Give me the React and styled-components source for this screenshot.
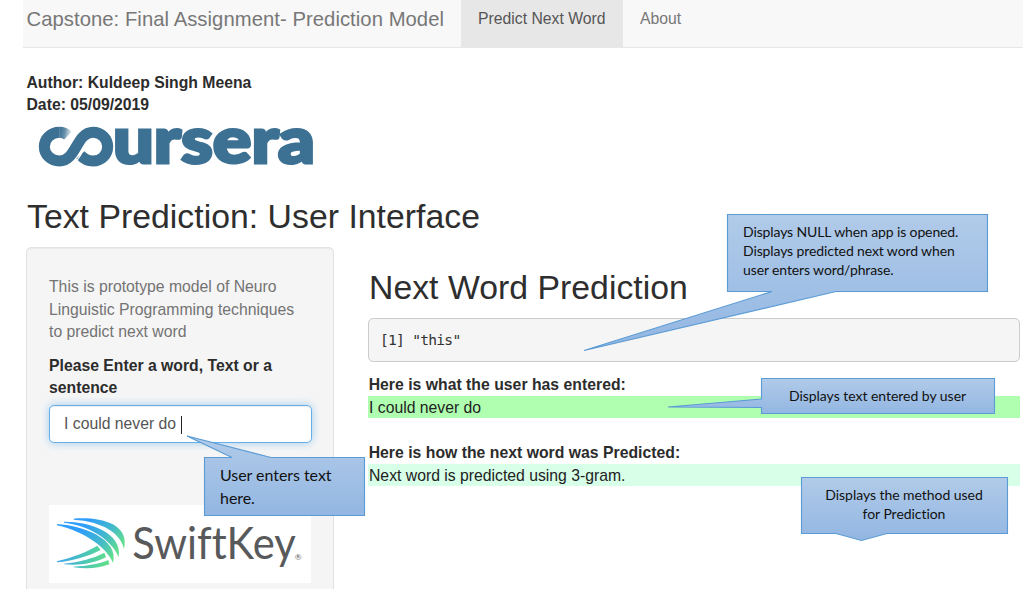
import React from "react";
import styled, { createGlobalStyle } from "styled-components";

const GlobalStyle = createGlobalStyle`
  * { box-sizing: border-box; }
  html, body { margin: 0; padding: 0; overflow: hidden; }
  body {
    background: #fff;
    color: #333;
    font: 15.75px/22.5px "Liberation Sans", Arial, sans-serif;
  }
`;

const Page = styled.div`
  position: relative;
  width: 1023px;
  height: 589px;
  overflow: hidden;
  display: flex;
  flex-direction: column;
`;

const Navbar = styled.nav`
  display: flex;
  height: 48px;
  margin-left: 23px;
  background: #f8f8f8;
  border-bottom: 1px solid #e7e7e7;
`;

const Brand = styled.div`
  width: 438px;
  padding: 8px 0 0 3.5px;
  font-size: 20.25px;
  line-height: 22px;
  letter-spacing: 0.05px;
  color: #777;
  white-space: nowrap;
`;

const Tab = styled.a`
  padding: 8px 17px 0;
  height: 48px;
  color: ${(p) => (p.$active ? "#555" : "#777")};
  background: ${(p) => (p.$active ? "#e7e7e7" : "transparent")};
  width: ${(p) => (p.$active ? "162px" : "auto")};
  white-space: nowrap;
`;

const Body = styled.main`
  display: flex;
  flex-direction: column;
  padding: 23px 3px 0 26px;
`;

const Strong = styled.div`
  font-weight: 700;
  color: #2c2c2c;
  white-space: nowrap;
`;

const Byline = styled.div`
  padding: 0.5px 0 0 0.5px;
  height: 45px;
`;

const CourseraLogo = styled.svg`
  display: block;
  width: 300px;
  height: 60px;
  margin: 2px 0 0 4px;
  overflow: visible;
`;

const Heading = styled.h2`
  margin: 0;
  font-size: 33.75px;
  line-height: 37px;
  font-weight: 400;
  letter-spacing: 0.03px;
  color: #2e2e2e;
  white-space: nowrap;
`;

const PageHeading = styled(Heading)`
  margin: 20px 0 12px 1px;
`;

const Columns = styled.div`
  display: flex;
  align-items: flex-start;
  gap: 34px;
`;

const Sidebar = styled.aside`
  width: 308px;
  height: 370px;
  padding: 28px 22px;
  background: #f5f5f5;
  border: 1px solid #e3e3e3;
  border-radius: 5px;
  box-shadow: inset 0 1px 1px rgba(0, 0, 0, 0.05);
`;

const Help = styled.p`
  margin: 0 0 11px;
  color: #737373;
`;

const Field = styled.div`
  display: flex;
  align-items: center;
  width: 263px;
  height: 38px;
  margin-top: 5px;
  padding: 2px 0 0 14px;
  color: #555;
  background: #fff;
  border: 1px solid #66afe9;
  border-radius: 5px;
  box-shadow: inset 0 1px 1px rgba(0, 0, 0, 0.075), 0 0 8px rgba(102, 175, 233, 0.6);
`;

const Caret = styled.span`
  width: 1px;
  height: 18px;
  margin-left: 5px;
  background: #222;
`;

const SwiftKeyLogo = styled.svg`
  display: block;
  width: 262px;
  height: 78px;
  margin-top: 62px;
  background: #fff;
  font-variant-ligatures: none;
`;

const Results = styled.section`
  width: 652px;
  padding-top: 22px;
`;

const ResultsHeading = styled(Heading)`
  padding-left: 1px;
`;

const Output = styled.pre`
  margin: 12px 0 11px;
  height: 44px;
  padding: 10px 11px;
  font: 14.625px/21px "DejaVu Sans Mono", monospace;
  letter-spacing: -0.75px;
  background: #f5f5f5;
  border: 1px solid #ccc;
  border-radius: 5px;
`;

const ResultLabel = styled(Strong)`
  height: 23px;
  padding-left: 0.7px;
  line-height: 24px;
  letter-spacing: 0.02px;
`;

const Highlight = styled.div`
  height: 22px;
  margin-bottom: 23px;
  padding-left: 1px;
  line-height: 24px;
  color: #222;
  background: ${(p) => p.$color};
`;

const Note = styled.div`
  position: absolute;
  left: ${(p) => p.$x}px;
  top: ${(p) => p.$y}px;
  width: ${(p) => p.$w}px;
  height: ${(p) => p.$h}px;
`;

const NoteShape = styled.svg`
  position: absolute;
  inset: 0;
  overflow: visible;
`;

const NoteText = styled.div`
  position: relative;
  padding: ${(p) => p.$pad};
  color: #111;
  font-family: Lato, sans-serif;
  font-size: ${(p) => p.$size}px;
  line-height: ${(p) => p.$line}px;
  letter-spacing: ${(p) => p.$track}px;
  text-align: ${(p) => p.$align || "left"};
  white-space: pre;
`;

function Callout({ id, x, y, w, h, points, top, bottom, text, ...type }) {
  return (
    <Note $x={x} $y={y} $w={w} $h={h}>
      <NoteShape width={w} height={h}>
        <defs>
          <linearGradient id={id} gradientUnits="userSpaceOnUse" x1="0" y1={top} x2="0" y2={bottom}>
            <stop offset="0" stopColor="#b1cbe9" />
            <stop offset="1" stopColor="#92b6e2" />
          </linearGradient>
        </defs>
        <polygon points={points} fill={`url(#${id})`} stroke="#5b9bd5" strokeWidth="1.1" />
      </NoteShape>
      <NoteText {...type}>{text}</NoteText>
    </Note>
  );
}

function Coursera() {
  return (
    <CourseraLogo viewBox="0 0 900 180" role="img" aria-label="coursera">
      <defs>
        <linearGradient id="fade" gradientUnits="userSpaceOnUse" x1="88" y1="48" x2="124" y2="54">
          <stop offset="0" stopColor="#3d7193" />
          <stop offset="0.4" stopColor="#3d7193" stopOpacity="0.8" />
          <stop offset="1" stopColor="#3d7193" stopOpacity="0.05" />
        </linearGradient>
      </defs>
      <g fill="none" strokeWidth="33">
        <path d="M88 43 C98 43 107 46 114 53" stroke="url(#fade)" />
        <path
          d="M88.5 43 C63 43 43 62 43 86 C43 110 63 129 88 129 C140 129 138 43 189 43 C214 43 233 62 233 86 C233 110 214 129 189 129 C173 129 161 122 151 111"
          stroke="#3d7193"
        />
        <path d="M161 94 C154 109 148 119 138 131" stroke="#fff" strokeWidth="4" />
      </g>
      <text
        x="249"
        y="136"
        textLength="606"
        lengthAdjust="spacingAndGlyphs"
        fontFamily="Lato, sans-serif"
        fontWeight="900"
        fontSize="192"
        fill="#3d7193"
        stroke="#3d7193"
        strokeWidth="9"
      >
        ursera
      </text>
    </CourseraLogo>
  );
}

function SwiftKey() {
  return (
    <SwiftKeyLogo viewBox="12 15 786 234" role="img" aria-label="SwiftKey">
      <defs>
        <linearGradient id="wing" gradientUnits="userSpaceOnUse" x1="120" y1="75" x2="220" y2="150">
          <stop offset="0" stopColor="#2f9dfb" />
          <stop offset="0.55" stopColor="#43b9cb" />
          <stop offset="1" stopColor="#62de8c" />
        </linearGradient>
        <linearGradient id="tail" gradientUnits="userSpaceOnUse" x1="36" y1="170" x2="185" y2="195">
          <stop offset="0" stopColor="#3ba4f0" />
          <stop offset="0.6" stopColor="#4cc8b2" />
          <stop offset="1" stopColor="#62de8c" />
        </linearGradient>
      </defs>
      <g fill="url(#wing)">
        <path d="M86 56 C150 50 257 64 237 147 C228 100 172 64 86 59 Z" />
        <path d="M57 65 C130 64 234 96 221 172 C206 128 140 76 57 68 Z" />
        <path d="M36 72 C110 76 224 116 204 189 C188 146 120 94 36 76 Z" />
      </g>
      <g fill="url(#tail)">
        <path d="M36 184 C83 172 126 156 157 137 L167 150 C130 169 83 183 36 187 Z" />
        <path d="M57 191 C105 186 145 175 178 158 L183 172 C145 190 104 198 57 193 Z" />
        <path d="M86 200 C128 198 160 192 190 180 L193 193 C160 206 124 207 86 202 Z" />
      </g>
      <text x="262" y="177" textLength="490" lengthAdjust="spacingAndGlyphs" fontFamily="Lato, sans-serif" fontSize="134" fill="#58595b">
        SwiftKey
      </text>
      <text x="749" y="179" fontFamily="Lato, sans-serif" fontSize="25" fill="#666">
        ®
      </text>
    </SwiftKeyLogo>
  );
}

export default function App() {
  return (
    <>
      <GlobalStyle />
      <Page>
        <Navbar>
          <Brand>Capstone: Final Assignment- Prediction Model</Brand>
          <Tab $active>Predict Next Word</Tab>
          <Tab>About</Tab>
        </Navbar>
        <Body>
          <Byline>
            <Strong>Author: Kuldeep Singh Meena</Strong>
            <Strong>Date: 05/09/2019</Strong>
          </Byline>
          <Coursera />
          <PageHeading>Text Prediction: User Interface</PageHeading>
          <Columns>
            <Sidebar>
              <Help>
                This is prototype model of Neuro
                <br />
                Linguistic Programming techniques
                <br />
                to predict next word
              </Help>
              <Strong>
                Please Enter a word, Text or a
                <br />
                sentence
              </Strong>
              <Field>
                I could never do
                <Caret />
              </Field>
              <SwiftKey />
            </Sidebar>
            <Results>
              <ResultsHeading>Next Word Prediction</ResultsHeading>
              <Output>[1] "this"</Output>
              <ResultLabel>Here is what the user has entered:</ResultLabel>
              <Highlight $color="#b0ffb0">I could never do</Highlight>
              <ResultLabel>Here is how the next word was Predicted:</ResultLabel>
              <Highlight $color="#d8ffe8">Next word is predicted using 3-gram.</Highlight>
            </Results>
          </Columns>
        </Body>

        <Callout
          id="note-null" x={727} y={214} w={261} h={78} top={0} bottom={137}
          points="0.5,0.5 260.5,0.5 260.5,77.5 109,77.5 -143,136.5 45,77.5 0.5,77.5"
          $pad="8px 0 0 16px" $size={14} $line={19} $track={-0.12}
          text={"Displays NULL when app is opened.\nDisplays predicted next word when\nuser enters word/phrase."}
        />
        <Callout
          id="note-entered" x={761} y={378} w={234} h={36} top={0} bottom={36}
          points="0.5,0.5 233.5,0.5 233.5,35.5 0.5,35.5 0.5,29.5 -93,29 0.5,21 0.5,0.5"
          $pad="8px 1px 0 0" $size={14} $line={19} $track={-0.03} $align="center"
          text="Displays text entered by user"
        />
        <Callout
          id="note-method" x={801} y={477} w={207} h={57} top={0} bottom={64}
          points="0.5,0.5 206.5,0.5 206.5,56.5 86,56.5 60.5,63.5 35,56.5 0.5,56.5"
          $pad="8px 1px 0 0" $size={14} $line={19} $track={-0.05} $align="center"
          text={"Displays the method used\nfor Prediction"}
        />
        <Callout
          id="note-input" x={204} y={457} w={161} h={59} top={-21} bottom={59}
          points="0.5,0.5 28,0.5 -17,-21 67,0.5 160.5,0.5 160.5,58.5 0.5,58.5"
          $pad="7px 0 0 16px" $size={16} $line={22.5} $track={-0.05}
          text={"User enters text\nhere."}
        />
      </Page>
    </>
  );
}
